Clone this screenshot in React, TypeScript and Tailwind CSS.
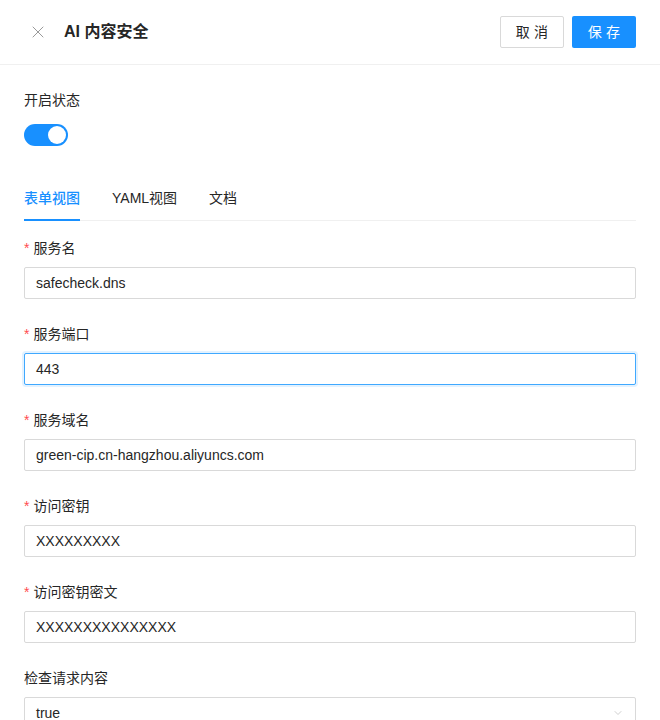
import { X, ChevronDown } from "lucide-react";

const font = { fontFamily: '"Liberation Sans", "Noto Sans CJK SC", sans-serif' };

function Field({ label, value, required = true, focused = false }: { label: string; value: string; required?: boolean; focused?: boolean }) {
  return (
    <div className="mb-6">
      <div className="h-[22px] flex items-center text-sm text-[#262626] mb-2">
        {required && <span className="text-[#ff4d4f] mr-1 text-sm leading-none">*</span>}
        {label}
      </div>
      <div
        className={
          "h-8 px-[11px] flex items-center text-sm text-[#262626] bg-white rounded-[2px] border " +
          (focused ? "border-[#40a9ff] shadow-[0_0_0_2px_rgba(24,144,255,0.12)]" : "border-[#d9d9d9]")
        }
      >
        {value}
      </div>
    </div>
  );
}

export default function App() {
  return (
    <div className="w-[660px] h-[720px] overflow-hidden bg-white" style={font}>
      <div className="h-[65px] flex items-center justify-between px-6 border-b border-[#f0f0f0]">
        <div className="flex items-center">
          <X className="w-5 h-5 text-[#999999] ml-[4px]" strokeWidth={1.2} />
          <span className="ml-[16px] text-base font-bold text-[#262626]">AI 内容安全</span>
        </div>
        <div className="flex items-center gap-2">
          <button className="h-8 w-[64px] text-sm tracking-[0.3em] pl-[4px] text-[#262626] border border-[#d9d9d9] rounded-[2px] bg-white">
            取消
          </button>
          <button className="h-8 w-[64px] text-sm tracking-[0.3em] pl-[4px] text-white bg-[#1890ff] rounded-[2px]">
            保存
          </button>
        </div>
      </div>

      <div className="px-6 pt-6">
        <div className="h-[22px] flex items-center text-sm text-[#262626] mb-2">开启状态</div>
        <div className="h-8 flex items-center mb-6">
          <div className="w-11 h-[22px] rounded-full bg-[#1890ff] relative">
            <div className="absolute right-[2px] top-[2px] w-[18px] h-[18px] rounded-full bg-white" />
          </div>
        </div>

        <div className="flex h-[46px] border-b border-[#f0f0f0] mb-4 text-sm">
          <div className="relative flex items-center text-[#1890ff] font-medium">
            表单视图
            <div className="absolute left-0 right-0 bottom-[-1px] h-[2px] bg-[#1890ff]" />
          </div>
          <div className="flex items-center ml-8 text-[#262626]">YAML视图</div>
          <div className="flex items-center ml-8 text-[#262626]">文档</div>
        </div>

        <Field label="服务名" value="safecheck.dns" />
        <Field label="服务端口" value="443" focused />
        <Field label="服务域名" value="green-cip.cn-hangzhou.aliyuncs.com" />
        <Field label="访问密钥" value="XXXXXXXXX" />
        <Field label="访问密钥密文" value="XXXXXXXXXXXXXXX" />

        <div className="mb-6">
          <div className="h-[22px] flex items-center text-sm text-[#262626] mb-2">检查请求内容</div>
          <div className="h-8 px-[11px] flex items-center justify-between text-sm text-[#262626] bg-white rounded-[2px] border border-[#d9d9d9]">
            true
            <ChevronDown className="w-3 h-3 text-[#bfbfbf]" strokeWidth={1.5} />
          </div>
        </div>
      </div>
    </div>
  );
}
